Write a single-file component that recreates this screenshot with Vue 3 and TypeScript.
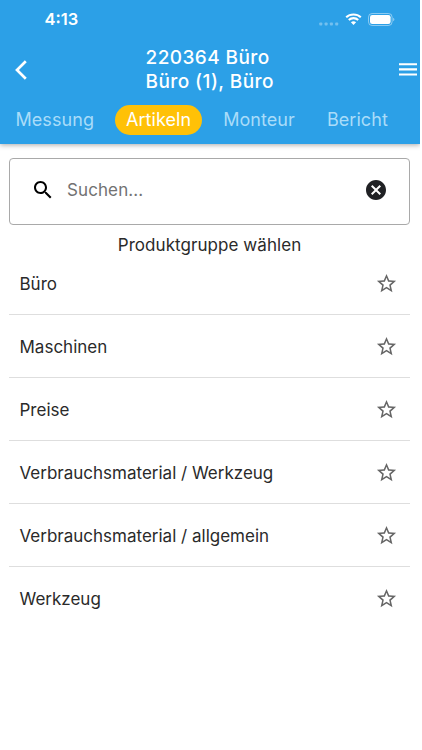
<script setup lang="ts">
import { ref } from 'vue'

const tabs = ['Messung', 'Artikeln', 'Monteur', 'Bericht']
const activeTab = ref('Artikeln')
const search = ref('')
const groups = [
  'Büro',
  'Maschinen',
  'Preise',
  'Verbrauchsmaterial / Werkzeug',
  'Verbrauchsmaterial / allgemein',
  'Werkzeug',
]
</script>

<template>
  <div class="screen">
    <header class="header">
      <div class="status">
        <span class="time">4:13</span>
        <div class="indicators">
          <svg class="dots" width="20" height="4" viewBox="0 0 20 4">
            <rect x="0.3" y="0.5" width="3" height="3" rx="0.8" />
            <rect x="5.6" y="0.5" width="3" height="3" rx="0.8" />
            <rect x="10.9" y="0.5" width="3" height="3" rx="0.8" />
            <rect x="16.2" y="0.5" width="3" height="3" rx="0.8" />
          </svg>
          <svg class="wifi" width="17" height="12" viewBox="0 0 17 12">
            <path d="M1.2 4.2C5.2.5 11.8.5 15.8 4.2M3.8 6.9c2.6-2.4 6.8-2.4 9.4 0" />
            <path class="wedge" d="M5.9 9.2c1.5-1.3 3.7-1.3 5.2 0L8.5 11.9z" />
          </svg>
          <svg class="battery" width="27" height="13" viewBox="0 0 27 13">
            <rect class="shell" x="0.5" y="0.5" width="23.6" height="12" rx="3.6" />
            <rect x="2" y="2" width="20.6" height="9" rx="2.3" fill="#fff" />
            <path class="cap" d="M25.3 4.7c1.4.6 1.4 3 0 3.6z" />
          </svg>
        </div>
      </div>
      <div class="titlebar">
        <button class="icon-button back" aria-label="Zurück">
          <svg width="12" height="20" viewBox="0 0 12 20"><path d="M10.8 1.3 2 10l8.8 8.7" /></svg>
        </button>
        <h1 class="title">220364 Büro<br />Büro (1), Büro</h1>
        <button class="icon-button menu" aria-label="Menü">
          <svg width="18" height="13" viewBox="0 0 18 13">
            <path d="M0 1.25h18M0 6.35h18M0 11.45h18" />
          </svg>
        </button>
      </div>
      <nav class="tabs">
        <button
          v-for="tab in tabs"
          :key="tab"
          class="tab"
          :class="{ active: tab === activeTab }"
          @click="activeTab = tab"
        >{{ tab }}</button>
      </nav>
    </header>

    <main class="content">
      <label class="search">
        <svg class="magnifier" width="24" height="24" viewBox="0 0 24 24">
          <path d="M15.5 14h-.79l-.28-.27C15.41 12.59 16 11.11 16 9.5 16 5.91 13.09 3 9.5 3S3 5.91 3 9.5 5.91 16 9.5 16c1.61 0 3.09-.59 4.23-1.57l.27.28v.79l5 4.99L20.49 19l-4.99-5zm-6 0C7.01 14 5 11.99 5 9.5S7.01 5 9.5 5 14 7.01 14 9.5 11.99 14 9.5 14z" />
        </svg>
        <input v-model="search" class="field" placeholder="Suchen..." />
        <svg class="clear" width="24" height="24" viewBox="0 0 24 24" @click="search = ''">
          <path d="M12 2C6.47 2 2 6.47 2 12s4.47 10 10 10 10-4.47 10-10S17.53 2 12 2zm5 13.59L15.59 17 12 13.41 8.41 17 7 15.59 10.59 12 7 8.41 8.41 7 12 10.59 15.59 7 17 8.41 13.41 12 17 15.59z" />
        </svg>
      </label>
      <h2 class="caption">Produktgruppe wählen</h2>
      <ul class="list">
        <li v-for="group in groups" :key="group" class="row">
          <span class="name">{{ group }}</span>
          <svg class="star" width="23" height="23" viewBox="0 0 24 24">
            <path d="M22 9.24l-7.19-.62L12 2 9.19 8.63 2 9.24l5.46 4.73L5.82 21 12 17.27 18.18 21l-1.63-7.03L22 9.24zM12 15.4l-3.76 2.27 1-4.28-3.32-2.88 4.38-.38L12 6.1l1.71 4.04 4.38.38-3.32 2.88 1 4.28L12 15.4z" />
          </svg>
        </li>
      </ul>
    </main>
  </div>
</template>

<style>
body {
  background: #fff;
}
</style>

<style scoped>
.screen {
  width: 420px;
  height: 750px;
  overflow: hidden;
  background: #fff;
  font-family: Inter, 'Liberation Sans', sans-serif;
  color: #2a2a2a;
}
button {
  border: 0;
  padding: 0;
  background: none;
  font: inherit;
  color: inherit;
}
.header {
  box-sizing: border-box;
  height: 144px;
  background: #2ca0e7;
  color: #fff;
  box-shadow: 0 1px 5px rgba(0, 0, 0, 0.34);
}
.status {
  display: flex;
  justify-content: space-between;
  height: 40px;
  padding: 0 25px 0 44.5px;
}
.time {
  padding-top: 9px;
  font-size: 16.5px;
  line-height: 21px;
  font-weight: 600;
}
.indicators {
  display: flex;
  align-items: flex-start;
  padding-top: 13px;
}
.dots {
  margin: 9px 6px 0 0;
  fill: rgba(255, 255, 255, 0.34);
}
.wifi {
  margin-right: 6px;
  fill: none;
  stroke: #fff;
  stroke-width: 2.1;
}
.wedge {
  fill: #fff;
  stroke: none;
}
.shell {
  fill: none;
  stroke: rgba(255, 255, 255, 0.45);
}
.cap {
  fill: rgba(255, 255, 255, 0.6);
}
.titlebar {
  display: grid;
  grid-template-columns: 145.5px 1fr 21px;
  align-items: center;
  height: 59px;
}
.icon-button {
  display: flex;
  fill: none;
  stroke: #fff;
}
.back {
  padding-left: 15px;
  stroke-width: 2.7;
}
.menu {
  stroke-width: 2.1;
}
.title {
  margin: 0;
  font-size: 19px;
  line-height: 24px;
  font-weight: 500;
  letter-spacing: 0.42px;
}
.tabs {
  display: flex;
  align-items: center;
  height: 42px;
  padding-left: 4.5px;
}
.tab {
  height: 30px;
  padding: 0 11px;
  border-radius: 15px;
  font-size: 18px;
  line-height: 30px;
  letter-spacing: 0.06px;
  color: #a9dcf9;
  margin-right: 10px;
}
.tab.active {
  background: #ffc107;
  color: #fff;
}
.content {
  padding: 13.5px 10px 0 9px;
}
.search {
  display: flex;
  align-items: center;
  box-sizing: border-box;
  height: 67px;
  padding: 0 21px 2px;
  border: 1px solid #a9a9a9;
  border-radius: 4px;
}
.magnifier {
  fill: #000;
}
.field {
  flex: 1;
  min-width: 0;
  height: 24px;
  margin: 0 0 1px;
  padding: 0 12px;
  border: 0;
  outline: 0;
  background: none;
  font: 17px/24px Inter, sans-serif;
  letter-spacing: 0.1px;
}
.field::placeholder {
  color: #727272;
  opacity: 1;
}
.clear {
  fill: #202124;
}
.caption {
  margin: 9.5px 0 0;
  font-size: 17px;
  line-height: 22px;
  font-weight: 400;
  letter-spacing: 0.06px;
  text-align: center;
}
.list {
  margin: 0;
  padding: 0;
  list-style: none;
}
.row {
  display: flex;
  align-items: center;
  justify-content: space-between;
  box-sizing: border-box;
  height: 63px;
  padding: 0 12px 0 10.5px;
  border-bottom: 1px solid #dedede;
  font-size: 17px;
  letter-spacing: 0;
}
.name {
  padding-top: 2px;
}
.row:first-child {
  height: 59px;
  padding-bottom: 3px;
}
.row:first-child .name {
  padding-top: 1px;
}
.row:last-child {
  border-bottom: 0;
  padding-bottom: 1px;
}
.star {
  fill: #666;
}
</style>
